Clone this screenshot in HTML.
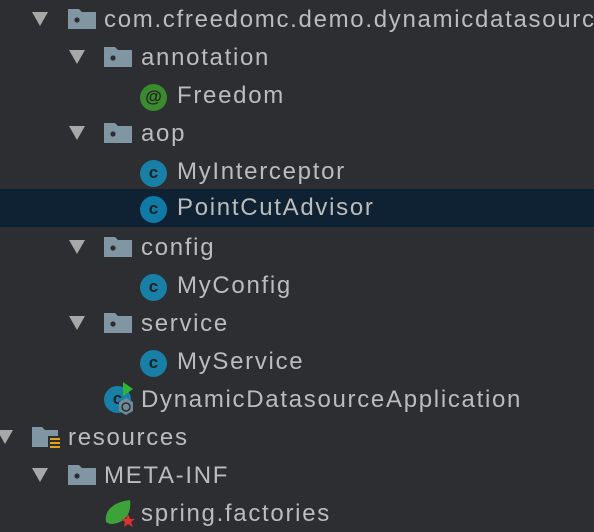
<!DOCTYPE html>
<html><head><style>
body{margin:0;width:594px;height:528px;background:#2c2e31;overflow:hidden;font-family:"Liberation Sans",sans-serif;font-size:24px;letter-spacing:1.7px;color:#bcbcbc;position:relative}
.r{position:absolute;left:0;width:594px;height:38px}
.t{position:absolute;top:8px;white-space:nowrap;line-height:24px}
.tri{position:absolute;top:12px;width:0;height:0;border-left:8px solid transparent;border-right:8px solid transparent;border-top:14px solid #a8a8a8}
.fd{position:absolute;top:9px;width:28px;height:20px}
.ci{position:absolute;top:8px;width:27px;height:27px;border-radius:50%;background:#187fa6;color:#222;font-size:17px;letter-spacing:0;font-weight:bold;text-align:center;line-height:26px}
</style></head><body>
<svg width="0" height="0" style="position:absolute"><defs><symbol id="f" viewBox="0 0 28 20"><path d="M0 0h11l3 3h14v17H0z" fill="#8096a3"/><circle cx="9" cy="11" r="2.6" fill="#2c2e31"/></symbol></defs></svg>

<div class="r" style="top:0"><div class="tri" style="left:32px"></div><svg class="fd" style="left:68px"><use href="#f"/></svg><div class="t" style="left:104px">com.cfreedomc.demo.dynamicdatasource</div></div>
<div class="r" style="top:38px"><div class="tri" style="left:69px"></div><svg class="fd" style="left:104px"><use href="#f"/></svg><div class="t" style="left:141px">annotation</div></div>
<div class="r" style="top:76px"><div class="ci" style="left:140px;background:#3a8a2e">@</div><div class="t" style="left:177px">Freedom</div></div>
<div class="r" style="top:114px"><div class="tri" style="left:69px"></div><svg class="fd" style="left:104px"><use href="#f"/></svg><div class="t" style="left:141px">aop</div></div>
<div class="r" style="top:152px"><div class="ci" style="left:140px">c</div><div class="t" style="left:177px">MyInterceptor</div></div>
<div class="r" style="top:189px;background:#0e2233"><div class="ci" style="left:140px;top:7px;background:#0f7aa6">c</div><div class="t" style="left:177px;top:7px">PointCutAdvisor</div></div>
<div class="r" style="top:228px"><div class="tri" style="left:69px"></div><svg class="fd" style="left:104px"><use href="#f"/></svg><div class="t" style="left:141px">config</div></div>
<div class="r" style="top:266px"><div class="ci" style="left:140px">c</div><div class="t" style="left:177px">MyConfig</div></div>
<div class="r" style="top:304px"><div class="tri" style="left:69px"></div><svg class="fd" style="left:104px"><use href="#f"/></svg><div class="t" style="left:141px">service</div></div>
<div class="r" style="top:342px"><div class="ci" style="left:140px">c</div><div class="t" style="left:177px">MyService</div></div>
<div class="r" style="top:380px"><div class="ci" style="left:104px;top:6px">c</div><svg style="position:absolute;left:118px;top:18px" width="16" height="18"><path d="M8 0l7 4v9l-7 4-7-4V4z" fill="#6f8a99"/><circle cx="8" cy="9" r="4" fill="none" stroke="#2c2e31" stroke-width="1.5"/></svg><svg style="position:absolute;left:122px;top:2px" width="12" height="14"><path d="M1 0l10 7-10 7z" fill="#2fb52f"/></svg><div class="t" style="left:141px">DynamicDatasourceApplication</div></div>
<div class="r" style="top:418px"><div class="tri" style="left:-3px"></div><svg style="position:absolute;left:32px;top:9px" width="30" height="24"><path d="M0 0h10l3 3h13v17H0z" fill="#8096a3"/><path d="M16 9h13v15H16z" fill="#2c2e31"/><path d="M18 11h10v2H18zM18 15h10v2H18zM18 19h10v2H18z" fill="#e0a020"/></svg><div class="t" style="left:68px">resources</div></div>
<div class="r" style="top:456px"><div class="tri" style="left:32px"></div><svg class="fd" style="left:68px"><use href="#f"/></svg><div class="t" style="left:104px">META-INF</div></div>
<div class="r" style="top:494px"><svg style="position:absolute;left:104px;top:4px" width="32" height="30"><path d="M2 24C0 12 10 4 26 2 28 16 20 26 6 26z" fill="#3da23a"/><path d="M24 16l2 5 5 0-4 3 2 5-5-3-4 3 1-5-4-3 5 0z" fill="#e03030"/></svg><div class="t" style="left:141px">spring.factories</div></div>
</body></html>
